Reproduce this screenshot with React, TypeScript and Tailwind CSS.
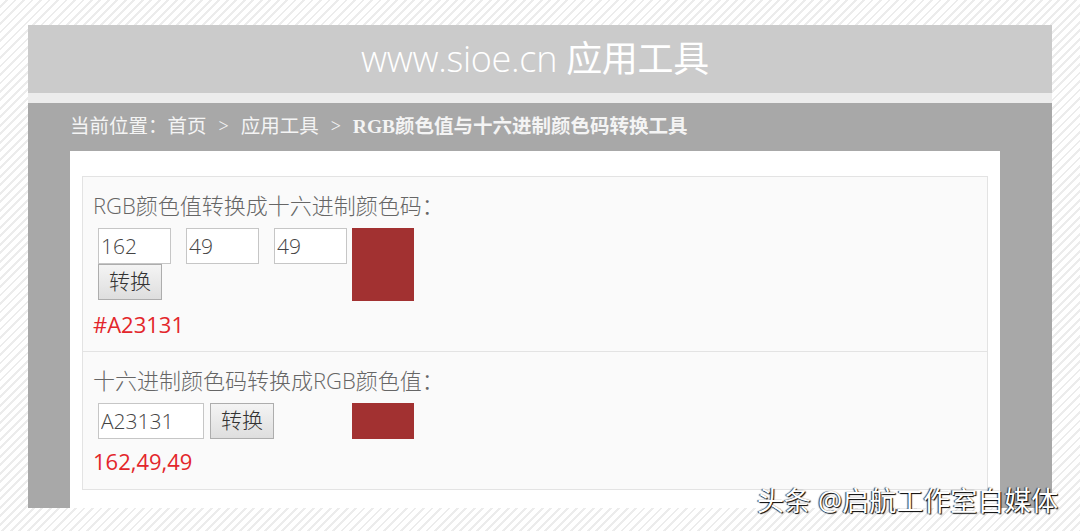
import React from "react";

const sans = "font-['Segoe_UI','Open_Sans','Noto_Sans_CJK_SC',sans-serif]";
const serif = "font-['Liberation_Serif','Noto_Sans_CJK_SC',serif]";

const Swatch = ({ tall }: { tall?: boolean }) => (
  <div className={`w-[62px] bg-[#a23131] ${tall ? "h-[73px]" : "h-[36px]"}`} />
);

const Field = ({ value, wide }: { value: string; wide?: boolean }) => (
  <input
    readOnly
    value={value}
    className={`h-[36px] border border-[#c6c6c6] bg-white px-[2px] text-[21px] font-light text-[#444] outline-none ${
      wide ? "w-[106px]" : "w-[73px]"
    }`}
  />
);

const ConvertButton = () => (
  <button
    type="button"
    className="h-[36px] w-[64px] border border-[#adadad] bg-gradient-to-b from-[#f4f4f4] to-[#dedede] text-[21px] font-light text-[#333]"
  >
    转换
  </button>
);

export default function App() {
  return (
    <div
      className={`relative h-[531px] w-[1080px] overflow-hidden bg-white ${sans}`}
      style={{
        backgroundImage:
          "repeating-linear-gradient(135deg, #ffffff 0px, #ffffff 4px, #ececec 4px, #ececec 6px)",
      }}
    >
      <div className="mx-[28px] pt-[25px]">
        {/* header */}
        <div className="flex h-[68px] items-center justify-center bg-[#cbcbcb] pr-[10px]">
          <span className="text-[36px] font-light tracking-[-0.3px] text-white">
            www.sioe.cn <span className="font-normal">应用工具</span>
          </span>
        </div>
        <div className="h-[10px] bg-[#ececec]" />

        {/* main panel */}
        <div className="h-[405px] bg-[#a8a8a8] pl-[42px] pr-[52px]">
          <div className={`flex h-[48px] items-center pb-[1px] text-[19.5px] text-[#f4f4f4] ${serif}`}>
            <span>当前位置：首页</span>
            <span className="mx-[12px] text-[18px]">&gt;</span>
            <span>应用工具</span>
            <span className="mx-[12px] text-[18px]">&gt;</span>
            <span className="font-bold">RGB颜色值与十六进制颜色码转换工具</span>
          </div>

          <div className="h-[357px] bg-white px-[12px] pt-[25px]">
            <div className="border border-[#e3e3e3] bg-[#fafafa]">
              {/* rgb to hex */}
              <div className="h-[175px] border-b border-[#e3e3e3] px-[10px] pt-[14px]">
                <div className="text-[22px] font-light leading-[28px] text-[#666]">
                  RGB颜色值转换成十六进制颜色码：
                </div>
                <div className="mt-[9px] flex items-start pl-[5px]">
                  <div>
                    <div className="flex gap-[15px]">
                      <Field value="162" />
                      <Field value="49" />
                      <Field value="49" />
                    </div>
                    <ConvertButton />
                  </div>
                  <div className="ml-[5px]">
                    <Swatch tall />
                  </div>
                </div>
                <div className="mt-[9px] text-[22px] leading-[28px] text-[#e3262b]">#A23131</div>
              </div>

              {/* hex to rgb */}
              <div className="h-[137px] px-[10px] pt-[14px]">
                <div className="text-[22px] font-light leading-[28px] text-[#666]">
                  十六进制颜色码转换成RGB颜色值：
                </div>
                <div className="mt-[9px] flex items-start pl-[5px]">
                  <Field value="A23131" wide />
                  <div className="ml-[6px]">
                    <ConvertButton />
                  </div>
                  <div className="ml-[78px]">
                    <Swatch />
                  </div>
                </div>
                <div className="mt-[8px] text-[22px] leading-[28px] text-[#e3262b]">162,49,49</div>
              </div>
            </div>
          </div>
        </div>
      </div>

      {/* watermark */}
      <div className="absolute left-[757px] top-[481px] text-[27px] text-white [text-shadow:1px_1px_1px_#000,-1px_0_1px_#333]">
        头条 @启航工作室自媒体
      </div>
    </div>
  );
}
